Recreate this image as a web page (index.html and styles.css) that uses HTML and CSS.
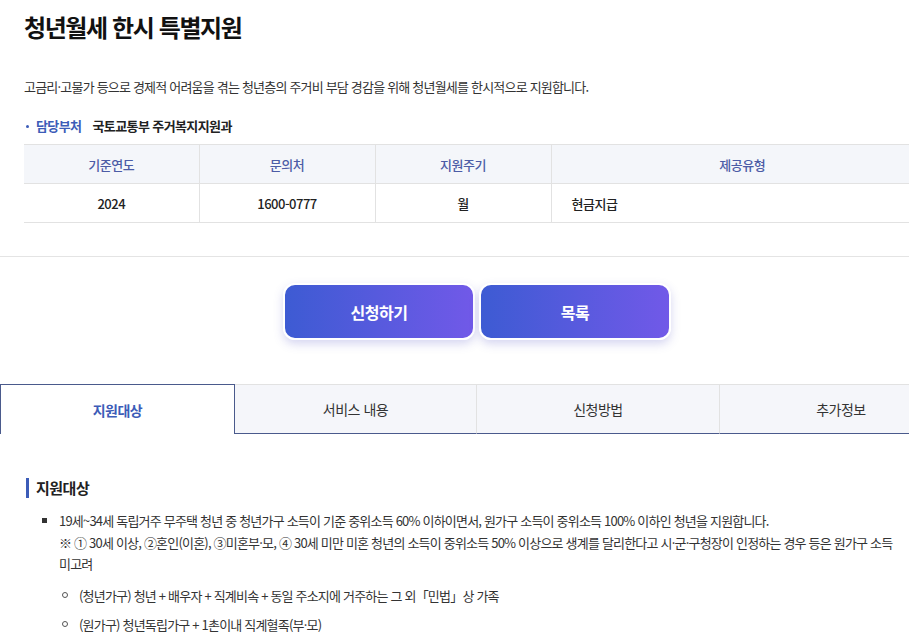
FILE: index.html
```html
<!DOCTYPE html>
<html lang="ko">
<head>
<meta charset="utf-8">
<link rel="stylesheet" href="styles.css">
</head>
<body>
<div class="frame">
<div class="page">
  <div class="head">
    <h1 class="title">청년월세 한시 특별지원</h1>
    <p class="desc">고금리·고물가 등으로 경제적 어려움을 겪는 청년층의 주거비 부담 경감을 위해 청년월세를 한시적으로 지원합니다.</p>
    <div class="dept"><span class="dept-label">담당부처</span><span class="dept-name">국토교통부 주거복지지원과</span></div>
    <table class="info">
      <colgroup><col class="c1"><col class="c2"><col class="c3"><col class="c4"></colgroup>
      <thead>
        <tr><th>기준연도</th><th>문의처</th><th>지원주기</th><th>제공유형</th></tr>
      </thead>
      <tbody>
        <tr><td>2024</td><td>1600-0777</td><td>월</td><td class="left">현금지급</td></tr>
      </tbody>
    </table>
  </div>
  <div class="actions">
    <a class="btn">신청하기</a>
    <a class="btn">목록</a>
  </div>
  <div class="tabs">
    <div class="tab t1 active">지원대상</div>
    <div class="tab t2">서비스 내용</div>
    <div class="tab t3">신청방법</div>
    <div class="tab t4">추가정보</div>
  </div>
  <div class="section">
    <h2 class="sec-title">지원대상</h2>
    <ul class="list">
      <li>19세~34세 독립거주 무주택 청년 중 청년가구 소득이 기준 중위소득 60% 이하이면서, 원가구 소득이 중위소득 100% 이하인 청년을 지원합니다.<br>※ ① 30세 이상, ②혼인(이혼), ③미혼부·모, ④ 30세 미만 미혼 청년의 소득이 중위소득 50% 이상으로 생계를 달리한다고 시·군·구청장이 인정하는 경우 등은 원가구 소득 미고려
        <ul class="sub">
          <li>(청년가구) 청년 + 배우자 + 직계비속 + 동일 주소지에 거주하는 그 외「민법」상 가족</li>
          <li>(원가구) 청년독립가구 + 1촌이내 직계혈족(부·모)</li>
        </ul>
      </li>
    </ul>
  </div>
</div>
</div>
</body>
</html>
```

FILE: styles.css
```css
html, body { margin: 0; padding: 0; overflow: hidden; background: #fff; }
body { font-family: "Noto Sans CJK KR", "Noto Sans", sans-serif; color: #333; }
.frame { width: 909px; overflow: hidden; }
.page { width: 954px; }
.head { padding: 0 0 33px 24px; border-bottom: 1px solid #e4e4e4; }
.title { margin: 0; padding-top: 8px; font-size: 24px; line-height: 38px; font-weight: 700; color: #111; letter-spacing: -1.4px; }
.desc { margin: 31px 0 0; font-size: 13px; line-height: 20px; letter-spacing: -0.8px; color: #333; }
.dept { margin-top: 19px; font-size: 13px; line-height: 20px; display: flex; align-items: center; letter-spacing: -0.6px; }
.dept-label { position: relative; padding-left: 12px; color: #3c5cb8; font-weight: 700; margin-right: 11px; }
.dept-label::before { content: ""; position: absolute; left: 2px; top: 9px; width: 3px; height: 3px; border-radius: 50%; background: #3c5cb8; }
.dept-name { font-weight: 700; color: #222; }
.info { margin-top: 8px; width: 909px; border-collapse: collapse; table-layout: fixed; font-size: 13px; letter-spacing: -0.5px; }
.c1 { width: 175px; } .c2 { width: 176px; } .c3 { width: 176px; }
.info th, .info td { height: 38px; border: 1px solid #e2e2e2; border-left: 0; text-align: center; padding: 0; }
.info th + th, .info td + td { border-left: 1px solid #e2e2e2; }
.info th:last-child, .info td:last-child { border-right: 0; }
.info th { background: #f4f6fa; color: #4c5ca6; font-weight: 500; }
.info td { color: #222; font-weight: 500; }
.info td.left { text-align: left; padding-left: 20px; }
.actions { display: flex; justify-content: center; gap: 4px; padding: 26px 0 44px; }
.btn { width: 188px; height: 53px; border: 2px solid #fff; border-radius: 12px; background: linear-gradient(90deg, #3d5bd3, #7159e8); color: #fff; font-weight: 700; font-size: 16px; display: flex; align-items: center; justify-content: center; box-shadow: 0 4px 10px rgba(90, 90, 200, 0.25); letter-spacing: -0.5px; }
.tabs { display: flex; height: 50px; }
.tab { flex: none; display: flex; align-items: center; justify-content: center; background: #f5f6fa; border-top: 1px solid #e2e2e2; border-bottom: 1px solid #4a5a8c; border-left: 1px solid #e2e2e2; font-size: 14px; color: #333; letter-spacing: -0.5px; box-sizing: border-box; }
.t1 { width: 235px; } .t2 { width: 241px; } .t3 { width: 243px; } .t4 { width: 243px; }
.tab.active { background: #fff; border: 1px solid #4a5a8c; border-bottom: 0; color: #3c5cb8; font-weight: 700; }
.tab.active + .tab { border-left: 0; }
.section { padding: 44px 0 0 26px; }
.sec-title { margin: 0; font-size: 15px; line-height: 20px; font-weight: 700; color: #222; border-left: 3px solid #3c5cb8; padding-left: 7px; letter-spacing: -0.5px; }
.list { list-style: none; margin: 12px 0 0; padding: 0 0 0 33px; font-size: 13px; line-height: 21.5px; letter-spacing: -0.8px; color: #333; word-break: keep-all; }
.list > li { position: relative; width: 845px; }
.list > li::before { content: ""; position: absolute; left: -17px; top: 8px; width: 5px; height: 5px; background: #333; }
.sub { list-style: none; margin: 10px 0 0; padding: 0 0 0 20px; }
.sub li { position: relative; margin-bottom: 8px; }
.sub li::before { content: ""; position: absolute; left: -17px; top: 7px; width: 4px; height: 4px; border: 1px solid #555; border-radius: 50%; }
```
